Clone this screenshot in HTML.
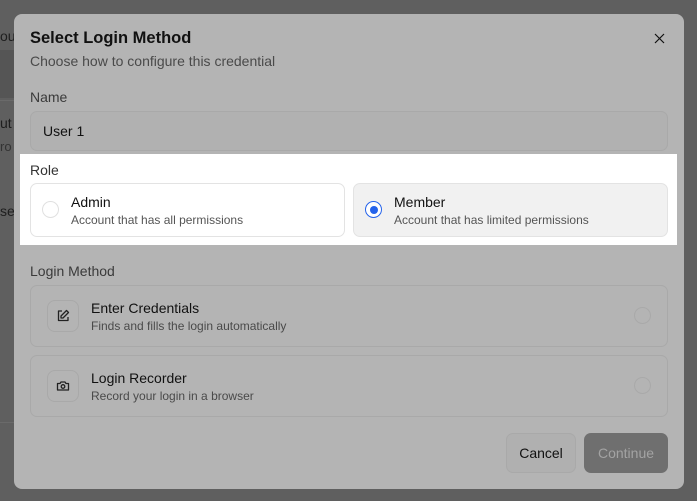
<!DOCTYPE html>
<html><head><meta charset="utf-8"><style>
*{box-sizing:border-box;margin:0;padding:0}
body{width:697px;height:501px;overflow:hidden;background:#5f5f5f;font-family:"Liberation Sans",sans-serif;position:relative}
.a{position:absolute}
.bg{color:#1e1e1e;font-size:14px}
.modal{left:14px;top:14px;width:670px;height:475px;background:#b4b4b4;border-radius:8px}
.t{color:#111}
.s{color:#4a4a4a}
.card{border:1px solid #a9a9a9;border-radius:7px}
.radio{width:17px;height:17px;border-radius:50%;border:1px solid #a9a9a9}
.ib{width:32px;height:32px;border:1px solid #a9a9a9;border-radius:8px;display:flex;align-items:center;justify-content:center}
</style></head><body>
<div class="a bg" style="left:0;top:28px">oul</div>
<div class="a" style="left:0;top:50px;width:14px;height:48px;background:#555"></div>
<div class="a bg" style="left:0;top:115px">ut</div>
<div class="a bg" style="left:0;top:139px;color:#333;font-size:13px">ro</div>
<div class="a bg" style="left:0;top:203px">se</div>
<div class="a" style="left:0;top:100px;width:14px;height:1px;background:#6a6a6a"></div>
<div class="a" style="left:0;top:422px;width:14px;height:1px;background:#6a6a6a"></div>

<div class="a modal"></div>
<div class="a t" style="left:30px;top:29px;font-size:16.5px;font-weight:bold">Select Login Method</div>
<div class="a s" style="left:30px;top:53px;font-size:14px">Choose how to configure this credential</div>
<svg class="a" style="left:654px;top:33px" width="11" height="11" viewBox="0 0 11 11"><path d="M1 1L10 10M10 1L1 10" stroke="#111" stroke-width="1.2"/></svg>
<div class="a s" style="left:30px;top:89px;font-size:14px;color:#3a3a3a">Name</div>
<div class="a card" style="left:30px;top:111px;width:638px;height:40px;background:#b1b1b1"></div>
<div class="a t" style="left:43px;top:123px;font-size:14px">User 1</div>

<div class="a" style="left:20px;top:154px;width:657px;height:91px;background:#fff"></div>
<div class="a" style="left:30px;top:162px;font-size:14px;color:#333">Role</div>
<div class="a card" style="left:30px;top:183px;width:315px;height:54px;border-color:#e3e3e3;background:#fff"></div>
<div class="a radio" style="left:42px;top:201px;border-color:#e0e0e0"></div>
<div class="a" style="left:71px;top:194px;font-size:14px;color:#111">Admin</div>
<div class="a" style="left:71px;top:213px;font-size:12px;color:#555">Account that has all permissions</div>
<div class="a card" style="left:353px;top:183px;width:315px;height:54px;border-color:#e3e3e3;background:#f1f1f1"></div>
<div class="a radio" style="left:365px;top:201px;border:1.5px solid #2563eb;background:#fff"></div>
<div class="a" style="left:369.5px;top:205.5px;width:8px;height:8px;border-radius:50%;background:#2563eb"></div>
<div class="a" style="left:394px;top:194px;font-size:14px;color:#111">Member</div>
<div class="a" style="left:394px;top:213px;font-size:12px;color:#555">Account that has limited permissions</div>

<div class="a" style="left:30px;top:263px;font-size:14px;color:#3a3a3a">Login Method</div>
<div class="a card" style="left:30px;top:285px;width:638px;height:62px"></div>
<div class="a ib" style="left:47px;top:300px"><svg width="16" height="16" viewBox="0 0 16 16" fill="none" stroke="#222" stroke-width="1.3" stroke-linejoin="round"><path d="M7 3H3.5v9.5H13V9"/><path d="M11.5 2.5l2 2L8 10H6V8z"/></svg></div>
<div class="a t" style="left:91px;top:300px;font-size:14px">Enter Credentials</div>
<div class="a s" style="left:91px;top:319px;font-size:12px">Finds and fills the login automatically</div>
<div class="a radio" style="left:634px;top:307px"></div>
<div class="a card" style="left:30px;top:355px;width:638px;height:62px"></div>
<div class="a ib" style="left:47px;top:370px"><svg width="16" height="16" viewBox="0 0 16 16" fill="none" stroke="#222" stroke-width="1.3" stroke-linejoin="round"><path d="M2.5 5.5h2.5l1-1.5h4l1 1.5h2.5v6.5h-11z"/><circle cx="8" cy="8.5" r="1.8"/></svg></div>
<div class="a t" style="left:91px;top:370px;font-size:14px">Login Recorder</div>
<div class="a s" style="left:91px;top:389px;font-size:12px">Record your login in a browser</div>
<div class="a radio" style="left:634px;top:377px"></div>

<div class="a card" style="left:506px;top:433px;width:70px;height:40px;background:#b0b0b0;display:flex;align-items:center;justify-content:center;font-size:14px;color:#111">Cancel</div>
<div class="a" style="left:584px;top:433px;width:84px;height:40px;border-radius:7px;background:#6f6f6f;display:flex;align-items:center;justify-content:center;font-size:14px;color:#a3a3a3">Continue</div>
</body></html>
